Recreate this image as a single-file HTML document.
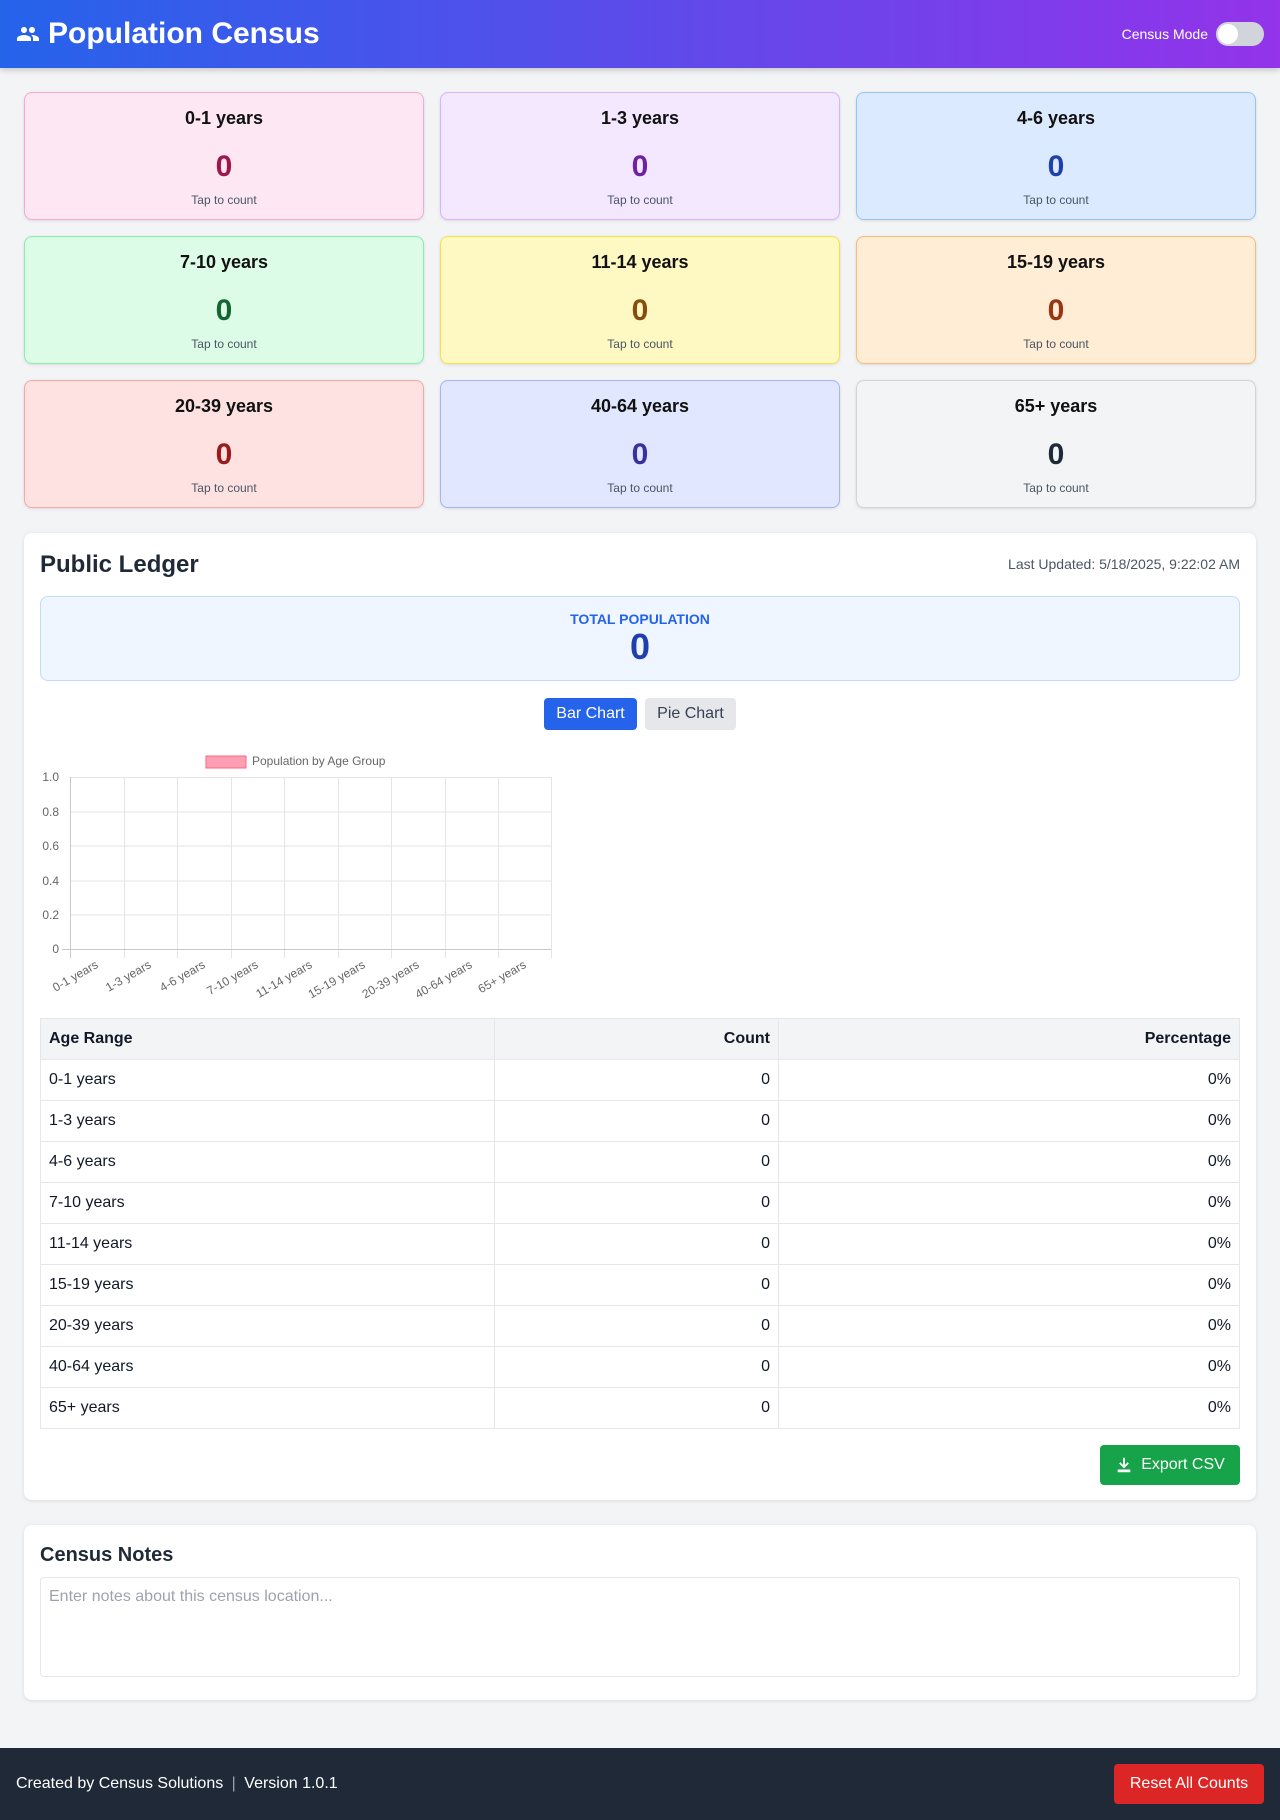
<!DOCTYPE html>
<html><head><meta charset="utf-8"><style>
*{box-sizing:border-box;margin:0;padding:0}
body{width:1280px;height:1820px;background:#f3f4f6;font-family:"Liberation Sans",sans-serif;color:#111827;position:relative;overflow:hidden}
.hdr{position:absolute;left:0;top:0;width:1280px;height:68px;background:linear-gradient(90deg,#2563eb,#9333ea);box-shadow:0 2px 6px rgba(0,0,0,.2);color:#fff}
.hdr h1{position:absolute;left:16px;top:17px;font-size:30px;font-weight:bold;display:flex;align-items:center;gap:8px}
.tg{position:absolute;right:16px;top:22px;display:flex;align-items:center;gap:8px;font-size:14px}
.sw{width:48px;height:24px;border-radius:12px;background:#d1d5db;position:relative}
.sw:after{content:"";position:absolute;left:2px;top:2px;width:20px;height:20px;border-radius:50%;background:#fff}
.card{position:absolute;width:400px;height:128px;border:1px solid;border-radius:8px;text-align:center;box-shadow:0 1px 3px rgba(0,0,0,.1)}
.card .t{position:absolute;top:15px;width:100%;font-size:18px;font-weight:bold;color:#111}
.card .n{position:absolute;top:57px;width:100%;font-size:30px;font-weight:bold}
.card .s{position:absolute;top:100px;width:100%;font-size:12px;color:#4b5563}
.panel{position:absolute;left:24px;width:1232px;background:#fff;border-radius:8px;box-shadow:0 1px 4px rgba(0,0,0,.1)}
table{position:absolute;left:16px;top:485px;width:1200px;border-collapse:collapse;font-size:16px}
td,th{border:1px solid #e5e7eb;height:41px;padding:0 8px}
th{background:#f3f4f6;text-align:left;font-weight:bold}
.r{text-align:right}
</style></head><body>
<div class="hdr"><h1><svg width="24" height="24" viewBox="0 0 24 24" fill="#fff"><path d="M16 11c1.66 0 2.99-1.34 2.99-3S17.66 5 16 5c-1.66 0-3 1.34-3 3s1.34 3 3 3zm-8 0c1.66 0 2.99-1.34 2.99-3S9.66 5 8 5C6.34 5 5 6.34 5 8s1.34 3 3 3zm0 2c-2.33 0-7 1.17-7 3.5V19h14v-2.5c0-2.33-4.67-3.5-7-3.5zm8 0c-.29 0-.62.02-.97.05 1.16.84 1.97 1.97 1.97 3.45V19h6v-2.5c0-2.33-4.67-3.5-7-3.5z"/></svg>Population Census</h1>
<div class="tg">Census Mode<div class="sw"></div></div></div>

<div class="card" style="left:24px;top:92px;background:#fce7f3;border-color:#f9a8d4"><div class="t">0-1 years</div><div class="n" style="color:#9d174d">0</div><div class="s">Tap to count</div></div>
<div class="card" style="left:440px;top:92px;background:#f3e8ff;border-color:#d8b4fe"><div class="t">1-3 years</div><div class="n" style="color:#6b21a8">0</div><div class="s">Tap to count</div></div>
<div class="card" style="left:856px;top:92px;background:#dbeafe;border-color:#93c5fd"><div class="t">4-6 years</div><div class="n" style="color:#1e40af">0</div><div class="s">Tap to count</div></div>
<div class="card" style="left:24px;top:236px;background:#dcfce7;border-color:#86efac"><div class="t">7-10 years</div><div class="n" style="color:#166534">0</div><div class="s">Tap to count</div></div>
<div class="card" style="left:440px;top:236px;background:#fef9c3;border-color:#fde047"><div class="t">11-14 years</div><div class="n" style="color:#854d0e">0</div><div class="s">Tap to count</div></div>
<div class="card" style="left:856px;top:236px;background:#ffedd5;border-color:#fdba74"><div class="t">15-19 years</div><div class="n" style="color:#9a3412">0</div><div class="s">Tap to count</div></div>
<div class="card" style="left:24px;top:380px;background:#fee2e2;border-color:#fca5a5"><div class="t">20-39 years</div><div class="n" style="color:#991b1b">0</div><div class="s">Tap to count</div></div>
<div class="card" style="left:440px;top:380px;background:#e0e7ff;border-color:#a5b4fc"><div class="t">40-64 years</div><div class="n" style="color:#3730a3">0</div><div class="s">Tap to count</div></div>
<div class="card" style="left:856px;top:380px;background:#f3f4f6;border-color:#d1d5db"><div class="t">65+ years</div><div class="n" style="color:#1f2937">0</div><div class="s">Tap to count</div></div>

<div class="panel" style="top:533px;height:967px">
<div style="position:absolute;left:16px;top:18px;font-size:24px;font-weight:bold;color:#1f2937">Public Ledger</div>
<div style="position:absolute;right:16px;top:23px;font-size:14px;color:#4b5563">Last Updated: 5/18/2025, 9:22:02 AM</div>
<div style="position:absolute;left:16px;top:63px;width:1200px;height:85px;background:#eff6ff;border:1px solid #bfdbfe;border-radius:8px;text-align:center">
<div style="margin-top:14px;font-size:14px;font-weight:bold;color:#2563eb">TOTAL POPULATION</div>
<div style="font-size:36px;font-weight:bold;color:#1e40af;line-height:40px">0</div></div>
<div style="position:absolute;left:520px;top:165px;width:93px;height:32px;background:#2563eb;color:#fff;border-radius:4px;font-size:16px;text-align:center;line-height:32px">Bar Chart</div>
<div style="position:absolute;left:621px;top:165px;width:91px;height:32px;background:#e5e7eb;color:#374151;border-radius:4px;font-size:16px;text-align:center;line-height:32px">Pie Chart</div>
<div style="position:absolute;left:1076px;top:912px;width:140px;height:40px;background:#16a34a;color:#fff;border-radius:4px;font-size:16px;display:flex;align-items:center;justify-content:center;gap:8px"><svg width="18" height="18" viewBox="0 0 20 20" fill="#fff"><path d="M3 15h14v3H3zM9 2h2v8l3-3 1.4 1.4L10 13.8 4.6 8.4 6 7l3 3z"/></svg>Export CSV</div>
</div>

<svg style="position:absolute;left:0;top:0" width="640" height="1010" font-family="Liberation Sans,sans-serif" font-size="12" fill="#666">
<rect x="206" y="756" width="40" height="12" fill="#ff9fb3" stroke="#ff6384"/>
<text x="252" y="765">Population by Age Group</text>
<g stroke="#e5e5e5">
<line x1="71" y1="777.5" x2="551" y2="777.5"/><line x1="71" y1="812" x2="551" y2="812"/><line x1="71" y1="846" x2="551" y2="846"/><line x1="71" y1="881" x2="551" y2="881"/><line x1="71" y1="915" x2="551" y2="915"/>
<line x1="124.5" y1="777" x2="124.5" y2="958"/><line x1="177.5" y1="777" x2="177.5" y2="958"/><line x1="231.5" y1="777" x2="231.5" y2="958"/><line x1="284.5" y1="777" x2="284.5" y2="958"/><line x1="338.5" y1="777" x2="338.5" y2="958"/><line x1="391.5" y1="777" x2="391.5" y2="958"/><line x1="445.5" y1="777" x2="445.5" y2="958"/><line x1="498.5" y1="777" x2="498.5" y2="958"/><line x1="551.5" y1="777" x2="551.5" y2="958"/>
</g>
<g stroke="#c8c8c8"><line x1="70.5" y1="777" x2="70.5" y2="958"/><line x1="62" y1="949.5" x2="551" y2="949.5"/></g>
<g text-anchor="end"><text x="59" y="781">1.0</text><text x="59" y="816">0.8</text><text x="59" y="850">0.6</text><text x="59" y="885">0.4</text><text x="59" y="919">0.2</text><text x="59" y="953">0</text>
<text transform="translate(99,967) rotate(-30)">0-1 years</text>
<text transform="translate(152,967) rotate(-30)">1-3 years</text>
<text transform="translate(206,967) rotate(-30)">4-6 years</text>
<text transform="translate(259,967) rotate(-30)">7-10 years</text>
<text transform="translate(313,967) rotate(-30)">11-14 years</text>
<text transform="translate(366,967) rotate(-30)">15-19 years</text>
<text transform="translate(420,967) rotate(-30)">20-39 years</text>
<text transform="translate(473,967) rotate(-30)">40-64 years</text>
<text transform="translate(527,967) rotate(-30)">65+ years</text></g>
</svg>

<div style="position:absolute;left:24px;top:0;width:0;height:0">
<table style="top:1018px"><tr><th style="width:454px">Age Range</th><th class="r" style="width:284px">Count</th><th class="r">Percentage</th></tr>
<tr><td>0-1 years</td><td class="r">0</td><td class="r">0%</td></tr>
<tr><td>1-3 years</td><td class="r">0</td><td class="r">0%</td></tr>
<tr><td>4-6 years</td><td class="r">0</td><td class="r">0%</td></tr>
<tr><td>7-10 years</td><td class="r">0</td><td class="r">0%</td></tr>
<tr><td>11-14 years</td><td class="r">0</td><td class="r">0%</td></tr>
<tr><td>15-19 years</td><td class="r">0</td><td class="r">0%</td></tr>
<tr><td>20-39 years</td><td class="r">0</td><td class="r">0%</td></tr>
<tr><td>40-64 years</td><td class="r">0</td><td class="r">0%</td></tr>
<tr><td>65+ years</td><td class="r">0</td><td class="r">0%</td></tr></table></div>

<div class="panel" style="top:1525px;height:175px">
<div style="position:absolute;left:16px;top:19px;font-size:20px;font-weight:bold;color:#1f2937">Census Notes</div>
<div style="position:absolute;left:16px;top:52px;width:1200px;height:100px;border:1px solid #e5e7eb;border-radius:4px;padding:10px 8px;font-size:16px;color:#9ca3af">Enter notes about this census location...</div>
</div>

<div style="position:absolute;left:0;top:1748px;width:1280px;height:72px;background:#1f2937;color:#fff;font-size:16px">
<div style="position:absolute;left:16px;top:27px">Created by Census Solutions <span style="color:#9ca3af;margin:0 4px">|</span> Version 1.0.1</div>
<div style="position:absolute;right:16px;top:16px;width:150px;height:40px;background:#dc2626;border-radius:4px;text-align:center;line-height:40px">Reset All Counts</div>
</div>
</body></html>
